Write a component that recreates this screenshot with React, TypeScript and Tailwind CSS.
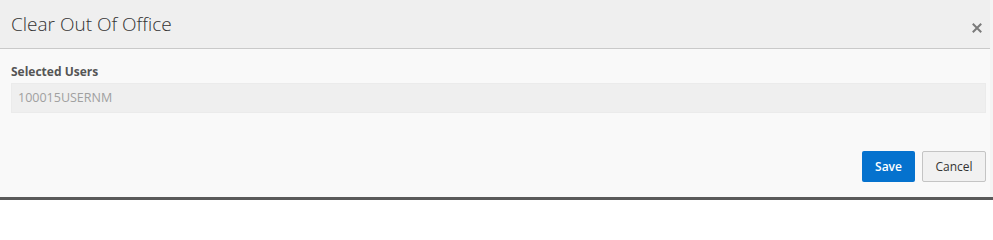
import React from "react";

export default function App() {
  return (
    <div
      className="w-[993px] h-[200px] overflow-hidden bg-[#f4f4f4] flex flex-col"
      style={{ fontFamily: '"Open Sans", "Noto Sans", "Liberation Sans", sans-serif' }}
    >
      <div className="w-[990px] h-[197px] flex flex-col bg-[#f9f9f9]">
        <div className="h-[49px] shrink-0 bg-[#efefef] border-b border-[#c9c9c9] flex items-start justify-between pl-[11px] pr-[6px]">
          <div className="mt-[12px] text-[19px] leading-[25px] font-light text-[#333]">Clear Out Of Office</div>
          <div className="mt-[21px] w-[14px] h-[14px] flex items-center justify-center">
            <svg width="10" height="10" viewBox="0 0 10 10">
              <path d="M1.5 1.5 L8.5 8.5 M8.5 1.5 L1.5 8.5" stroke="#7a7a7a" strokeWidth="2" strokeLinecap="square" />
            </svg>
          </div>
        </div>
        <div className="px-[11px] pt-[14px] flex flex-col">
          <div className="text-[12px] leading-[17px] font-bold text-[#555]">Selected Users</div>
          <div className="mt-[3px] h-[30px] w-[975px] bg-[#efefef] border border-[#ebebeb] flex items-center pl-[6px] text-[12.5px] text-[#a0a0a0]">
            100015USERNM
          </div>
        </div>
        <div className="flex justify-end gap-[7px] pr-[4px] mt-[38px]">
          <button className="h-[31px] w-[53px] rounded-[2px] bg-[#0572ce] text-white text-[12px] font-semibold">Save</button>
          <button className="h-[31px] w-[64px] rounded-[2px] bg-[#f1f1f1] border border-[#c4c4c4] text-[#333] text-[12px]">Cancel</button>
        </div>
      </div>
      <div className="h-[3px] w-full bg-[#5a5a5a]" />
    </div>
  );
}
